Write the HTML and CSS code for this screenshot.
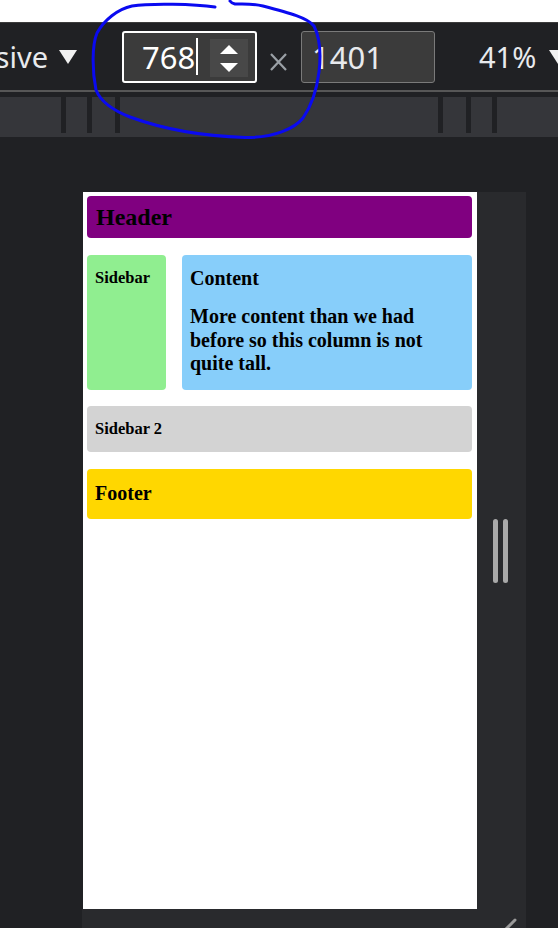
FILE: index.html
```html
<!DOCTYPE html>
<html lang="en">
<head>
<meta charset="utf-8">
<title>Responsive layout in device mode</title>
<link rel="stylesheet" href="styles.css">
</head>
<body>
<div class="app">
  <div class="topband"></div>
  <div class="toolbar">
    <div class="device-select"><span>Responsive</span></div>
    <svg class="caret" viewBox="0 0 18 14" width="18" height="14"><polygon points="0,0 18,0 9,14" fill="#f1f1f1"/></svg>
    <div class="dim dim-w">
      <span class="dim-value">768</span><span class="text-cursor"></span>
      <span class="spinner"><svg viewBox="0 0 38 38" width="38" height="38"><polygon points="10,15 28,15 19,6" fill="#fff"/><polygon points="10,24 28,24 19,33" fill="#fff"/></svg></span>
    </div>
    <svg class="times" viewBox="0 0 19 18" width="19" height="18"><path d="M2,1 L17,17 M17,1 L2,17" stroke="#9aa0a6" stroke-width="2.2" fill="none"/></svg>
    <div class="dim dim-h"><span class="dim-value">1401</span></div>
    <div class="zoom">41%</div>
    <svg class="caret caret-zoom" viewBox="0 0 18 14" width="18" height="14"><polygon points="0,0 18,0 9,14" fill="#f1f1f1"/></svg>
  </div>
  <div class="toolbar-rule"></div>
  <div class="ruler">
    <span class="tick t1"></span><span class="tick t2"></span><span class="tick t3"></span>
    <span class="tick t4"></span><span class="tick t5"></span><span class="tick t6"></span>
  </div>
  <div class="stage">
    <div class="device">
      <div class="page">
        <header class="box header">Header</header>
        <div class="row">
          <aside class="box sidebar"><h3 class="small-title">Sidebar</h3></aside>
          <main class="box content">
            <h2 class="big-title">Content</h2>
            <p>More content than we had before so this column is not quite tall.</p>
          </main>
        </div>
        <aside class="box sidebar2"><h3 class="small-title">Sidebar 2</h3></aside>
        <footer class="box footer"><h2 class="big-title">Footer</h2></footer>
      </div>
      <div class="bottom-strip"></div>
      <div class="side-strip">
        <div class="grips"><span class="grip"></span><span class="grip"></span></div>
        <svg class="corner" viewBox="0 0 49 12" width="49" height="12"><path d="M28,14 L38,4" stroke="#9a9a9a" stroke-width="3" stroke-linecap="round"/></svg>
      </div>
    </div>
  </div>
  <svg class="annotation" viewBox="0 0 558 150" width="558" height="150">
    <path d="M215,7 C195,4 150,3 132,6 C118,9 104,20 97,33 C92,45 92,70 96,90 C100,100 112,110 130,117 C160,128 200,136 245,137.5 C275,138 295,128 303,118 C312,105 317,88 319,72 C321,55 320,38 314,26 C308,18 290,13 263,6 C250,3 240,4 235,4 C233,3.5 231,2.5 230,1" fill="none" stroke="#0a0af0" stroke-width="3" stroke-linecap="round" stroke-linejoin="round"/>
  </svg>
</div>
</body>
</html>
```

FILE: styles.css
```css
html, body {
  margin: 0;
  padding: 0;
}

body {
  background: #202124;
  width: 558px;
  height: 928px;
  overflow: hidden;
}

.app {
  position: relative;
  height: 928px;
}

.topband {
  height: 22px;
  background: #ffffff;
}

.toolbar {
  height: 67px;
  border-top: 1px solid #3c3c3c;
  background: #202124;
  display: flex;
  align-items: center;
  overflow: hidden;
  white-space: nowrap;
  font-family: "Noto Sans", "Open Sans", sans-serif;
  color: #e8eaed;
}

.device-select {
  flex: none;
  width: 48px;
  display: flex;
  justify-content: flex-end;
  overflow: hidden;
  font-size: 29px;
  line-height: 67px;
}

.caret {
  flex: none;
  margin-left: 11px;
}

.dim {
  flex: none;
  box-sizing: border-box;
  height: 52px;
  background: #3b3b3b;
  border-radius: 3px;
  display: flex;
  align-items: center;
  font-size: 31px;
}

.dim-w {
  margin-left: 45px;
  width: 135px;
  border: 2px solid #ffffff;
  padding-left: 18px;
  line-height: 48px;
  color: #ffffff;
}

.text-cursor {
  width: 2px;
  height: 37px;
  background: #ffffff;
  margin-left: 1px;
}

.spinner {
  align-self: flex-start;
  margin: 6px 7px 0 auto;
  width: 38px;
  height: 38px;
  background: #484848;
  display: block;
}

.spinner svg {
  display: block;
}

.times {
  flex: none;
  margin-left: 12px;
  margin-top: 10px;
}

.dim-h {
  margin-left: 13px;
  width: 134px;
  border: 1px solid #7a7a7a;
  padding-left: 10px;
  line-height: 50px;
  color: #e8eaed;
}

.zoom {
  flex: none;
  margin-left: 44px;
  font-size: 29px;
  line-height: 67px;
}

.caret-zoom {
  margin-left: 13px;
}

.toolbar-rule {
  height: 2px;
  background: #575757;
}

.ruler {
  margin-top: 5px;
  height: 40px;
  background: #35363a;
  display: flex;
  align-items: flex-start;
}

.tick {
  flex: none;
  width: 5px;
  height: 36px;
  background: #202124;
}

.t1 { margin-left: 61px; }
.t2 { margin-left: 21px; }
.t3 { margin-left: 23px; }
.t4 { margin-left: 318px; }
.t5 { margin-left: 23px; }
.t6 { margin-left: 21px; }

.stage {
  padding: 55px 0 0 82px;
}

.device {
  display: grid;
  grid-template-columns: 395px 49px;
  grid-template-rows: 717px 19px;
}

.page {
  grid-column: 1;
  grid-row: 1;
  margin-left: 1px;
  background: #ffffff;
  box-sizing: border-box;
  padding: 4px 5px 0 4px;
  display: flex;
  flex-direction: column;
  gap: 16.5px;
  overflow: hidden;
  font-family: "Liberation Serif", "Times New Roman", serif;
  font-weight: bold;
  color: #000000;
}

.bottom-strip {
  grid-column: 1;
  grid-row: 2;
  background: #292a2d;
}

.side-strip {
  grid-column: 2;
  grid-row: 1 / 3;
  background: #292a2d;
  display: flex;
  flex-direction: column;
  align-items: center;
  padding-right: 2px;
}

.grips {
  margin-top: 327px;
  display: flex;
  gap: 5px;
}

.grip {
  width: 5px;
  height: 64px;
  border-radius: 3px;
  background: #a9a9a9;
}

.corner {
  margin-top: auto;
  margin-left: 2px;
  display: block;
}

.box {
  border-radius: 4px;
  box-sizing: border-box;
}

.header {
  background: #800080;
  height: 42px;
  line-height: 42px;
  font-size: 24px;
  padding-left: 9px;
}

.row {
  display: grid;
  grid-template-columns: 79px 290px;
  gap: 16px;
}

.small-title {
  margin: 0;
  font-size: 16.5px;
  line-height: 19px;
}

.big-title {
  margin: 0;
  font-size: 20px;
  line-height: 23px;
}

.sidebar {
  background: #90ee90;
  padding: 13px 8px;
}

.content {
  background: #87cefa;
  padding: 12.75px 8px 13.75px;
}

.content .big-title {
  margin-bottom: 15px;
}

.content p {
  margin: 0;
  font-size: 20px;
  line-height: 23.5px;
}

.sidebar2 {
  background: #d3d3d3;
  padding: 13px 8px 14px;
}

.footer {
  background: #ffd700;
  padding: 13px 8px 14px;
}

.annotation {
  position: absolute;
  top: 0;
  left: 0;
  pointer-events: none;
}
```
